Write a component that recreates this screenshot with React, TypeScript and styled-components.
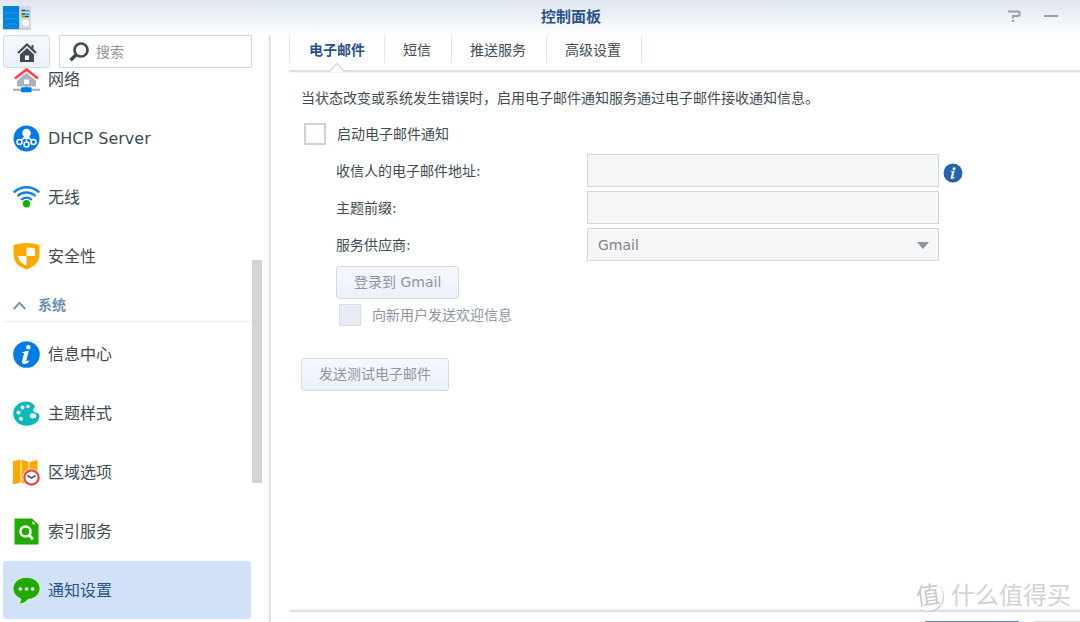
import React from "react";
import styled, { createGlobalStyle, css } from "styled-components";

const GlobalStyle = createGlobalStyle`
  * { box-sizing: border-box; }
  html, body { margin: 0; padding: 0; background: #fff; }
  body, button, input, select {
    font-family: "DejaVu Sans", "Noto Sans CJK SC", sans-serif;
    font-size: 14px;
    color: #414b55;
  }
`;

const Window = styled.div`
  position: relative;
  display: flex;
  flex-direction: column;
  height: 100vh;
  overflow: hidden;
  background: #fff;
`;

const TitleBar = styled.header`
  flex: none;
  display: grid;
  grid-template-columns: 142px 1fr 80px;
  align-items: center;
  height: 35px;
  background: linear-gradient(#dfe6ef, #fdfeff);
`;

const AppIcon = styled.svg`
  display: block;
  margin-left: 3px;
`;

const Title = styled.h1`
  margin: 0;
  padding-bottom: 2px;
  text-align: center;
  font-size: 15px;
  line-height: 20px;
  font-weight: 700;
  color: #2b528c;
`;

const WindowControls = styled.div`
  display: flex;
  gap: 17px;
  padding: 0 0 4px 4px;
`;

const ControlButton = styled.button`
  display: flex;
  padding: 0;
  border: 0;
  background: none;
`;

const Body = styled.div`
  flex: 1;
  min-height: 0;
  display: flex;
`;

const Sidebar = styled.aside`
  flex: none;
  width: 271px;
  display: flex;
  flex-direction: column;
  border-right: 2px solid #e4e4e4;
  box-shadow: inset -2px 0 2px -1px #eee;
`;

const SearchRow = styled.div`
  flex: none;
  display: flex;
  gap: 9px;
  padding: 0 17px 0 3px;
`;

const buttonFace = css`
  border: 1px solid #d2dae4;
  border-radius: 3px;
  background: linear-gradient(#f5f8fe, #ecf1fa);
`;

const HomeButton = styled.button`
  ${buttonFace}
  flex: none;
  display: flex;
  align-items: center;
  justify-content: center;
  width: 47px;
  height: 33px;
  padding: 0;
`;

const SearchBox = styled.label`
  flex: 1;
  min-width: 0;
  display: flex;
  align-items: center;
  gap: 7px;
  height: 33px;
  padding: 0 9px;
  border: 1px solid #d2dae2;
  background: #fff;
`;

const SearchInput = styled.input`
  flex: 1;
  min-width: 0;
  padding: 0;
  border: 0;
  outline: 0;
  background: none;
  line-height: 20px;
  &::placeholder { color: #8d959d; opacity: 1; }
`;

const ListArea = styled.div`
  flex: 1;
  min-height: 0;
  display: flex;
  gap: 1px;
  padding-left: 3px;
`;

const ListViewport = styled.nav`
  flex: 1;
  min-width: 0;
  overflow: hidden;
`;

const List = styled.div`
  display: flex;
  flex-direction: column;
  gap: 1px;
  margin-top: -18px;
`;

const Item = styled.a<{ $active?: boolean }>`
  flex: none;
  display: flex;
  align-items: center;
  gap: 8px;
  height: 58px;
  padding-left: 10px;
  border-radius: 3px;
  font-size: 16px;
  line-height: 24px;
  text-decoration: none;
  color: ${(p) => (p.$active ? "#2b528c" : "#414b55")};
  background: ${(p) => (p.$active ? "#d1e2f8" : "transparent")};
`;

const ItemLabel = styled.span`
  padding-top: 1px;
`;

const GroupHeading = styled.h2`
  flex: none;
  display: flex;
  align-items: center;
  gap: 12px;
  height: 36px;
  margin: 0 0 2px;
  padding: 3px 0 0 10px;
  border-bottom: 1px solid #e8edf1;
  font-size: 14px;
  line-height: 20px;
  font-weight: 700;
  color: #6a8fae;
`;

const ScrollTrack = styled.div`
  flex: none;
  display: flex;
  flex-direction: column;
  width: 10px;
  margin-right: 7px;
`;

const TrackGap = styled.div<{ $grow: number }>`
  flex: ${(p) => p.$grow} 0 0;
`;

const ScrollThumb = styled.div`
  flex: 223 0 0;
  background: #d1d3d5;
`;

const Main = styled.main`
  flex: 1;
  min-width: 0;
  display: flex;
  flex-direction: column;
  padding-left: 18px;
`;

const TabBar = styled.div`
  position: relative;
  flex: none;
  display: flex;
  height: 37px;
  padding-bottom: 7px;
  border-bottom: 2px solid #e0e0e0;
  box-shadow: 0 1px 1px #f4f4f4;
`;

const Tab = styled.button<{ $active?: boolean }>`
  position: relative;
  height: 28px;
  padding: 2px 20px 0 18px;
  border: 0;
  border-right: 1px solid #dfe7ef;
  background: none;
  line-height: 20px;
  font-weight: ${(p) => (p.$active ? 700 : 400)};
  color: ${(p) => (p.$active ? "#2b528c" : "#414b55")};
  &:first-child {
    padding: 2px 19px 0;
    border-left: 1px solid #dfe7ef;
  }
`;

const TabNotch = styled.svg`
  position: absolute;
  left: 50%;
  top: 27px;
  margin-left: -8px;
`;

const Content = styled.section`
  flex: 1;
  min-height: 0;
  padding: 16px 12px 0;
`;

const Intro = styled.p`
  margin: 0 0 15px;
  line-height: 20px;
  height: 20px;
  white-space: nowrap;
`;

const CheckRow = styled.div<{ $nested?: boolean }>`
  display: flex;
  align-items: center;
  gap: 11px;
  height: 22px;
  margin: ${(p) => (p.$nested ? "0 0 0 3px" : "0 0 9px 3px")};
  line-height: 20px;
  color: ${(p) => (p.$nested ? "#8c959f" : "#414b55")};
`;

const CheckBox = styled.input`
  appearance: none;
  flex: none;
  width: 22px;
  height: 22px;
  margin: 0;
  border: 2px solid #ccd3e0;
  background: #fff;
  &:disabled {
    border: 1px solid #d6dee9;
    background: #e7ecf4;
  }
`;

const Fields = styled.div`
  display: grid;
  grid-template-columns: 251px minmax(0, 352px) 24px;
  align-items: center;
  gap: 4px 0;
  padding-left: 35px;
  margin-bottom: 5px;
`;

const FieldLabel = styled.label`
  grid-column: 1;
  line-height: 20px;
`;

const fieldFace = css`
  display: block;
  width: 100%;
  height: 33px;
  padding: 0 10px;
  border: 1px solid #d0d8e0;
  border-radius: 0;
  background: #f5f6f8;
  color: #7f8489;
  opacity: 1;
`;

const TextField = styled.input`
  ${fieldFace}
`;

const SelectWrap = styled.div`
  position: relative;
`;

const SelectField = styled.select`
  ${fieldFace}
  appearance: none;
`;

const SelectArrow = styled.svg`
  position: absolute;
  right: 10px;
  top: 14px;
  pointer-events: none;
`;

const InfoButton = styled.button`
  display: flex;
  padding: 4px 0 0;
  margin-left: 4px;
  border: 0;
  background: none;
`;

const Nested = styled.div`
  display: flex;
  flex-direction: column;
  align-items: flex-start;
  gap: 5px;
  padding-left: 35px;
  margin-bottom: 32px;
`;

const PushButton = styled.button`
  ${buttonFace}
  height: 33px;
  padding: 0 17px 2px;
  line-height: 20px;
  color: #8c959f;
`;

const Footer = styled.footer`
  flex: none;
  display: flex;
  justify-content: flex-end;
  gap: 15px;
  height: 12px;
  padding-top: 9px;
  overflow: hidden;
  border-top: 2px solid #e0e0e0;
  box-shadow: 0 -1px 2px #f1f1f1;
`;

const FooterButton = styled.button<{ $primary?: boolean }>`
  flex: none;
  width: ${(p) => (p.$primary ? "94px" : "46px")};
  height: 33px;
  padding: 0;
  border: 1px solid ${(p) => (p.$primary ? "#5f7fb6" : "#d0dae4")};
  background: ${(p) => (p.$primary ? "#5f7fb6" : "#f0f4fb")};
`;

const Watermark = styled.div`
  position: absolute;
  right: 9px;
  bottom: 10px;
  display: flex;
  align-items: center;
  gap: 8px;
  font-size: 24px;
  line-height: 32px;
  color: #d2d2d2;
  text-shadow: 1px 1px 0 #fff;
  pointer-events: none;
`;

const WatermarkSeal = styled.span`
  display: flex;
  align-items: center;
  justify-content: center;
  width: 30px;
  height: 30px;
  border-radius: 50%;
  box-shadow: 1px 1px 1px #c8c8c8;
  background: #fff;
  color: #cacaca;
`;

const SealGlyph = styled.span`
  transform: rotate(-8deg);
`;

const icon = { width: 27, height: 27, viewBox: "0 0 27 27", "aria-hidden": true } as const;

const NetworkIcon = () => (
  <svg {...icon}>
    <path d="M4 14 13.500 5.500l9.500 8.500V20.500H4z" fill="#a9b3bf" />
    <path d="M11 18v-4.500h5V18z" fill="#fff" />
    <path d="M2 13 13.500 3.500 25 13" fill="none" stroke="#fff" strokeWidth="5" />
    <path d="M2 12.500 13.500 3.500 25 12.500" fill="none" stroke="#fd4044" strokeWidth="2.600" />
    <path d="M12.500 20h2v3h-2z" fill="#a9b3bf" />
    <path d="M0 22.700h27v2.200H0z" fill="#a9b3bf" />
    <rect x="8" y="21.300" width="10.500" height="5" rx="1" fill="#007be8" />
  </svg>
);

const DhcpIcon = () => (
  <svg {...icon}>
    <circle cx="13.500" cy="13.500" r="13" fill="#007be8" />
    <circle cx="13.500" cy="8" r="4.300" fill="#fff" />
    <path d="M11 11h5l1 3h-7z" fill="#fff" />
    <g fill="none" stroke="#fff" strokeWidth="1.500">
      <path d="M13.500 11v5.500M11 13l-3 2.500M16 13l3 2.500" />
      <circle cx="6.500" cy="17" r="2.500" />
      <circle cx="13.500" cy="19.500" r="2.500" />
      <circle cx="20.500" cy="17" r="2.500" />
    </g>
  </svg>
);

const WirelessIcon = () => (
  <svg {...icon}>
    <g fill="none" stroke="#0d82e8" strokeWidth="2.400">
      <path d="M.8 8.500a18 18 0 0 1 25.400 0" />
      <path d="M4.600 12.200a12.600 12.600 0 0 1 17.800 0" />
      <path d="M8.200 15.800a7.500 7.500 0 0 1 10.600 0" />
    </g>
    <circle cx="13.500" cy="19.800" r="3.700" fill="#1fab00" />
  </svg>
);

const ShieldIcon = () => (
  <svg {...icon}>
    <path d="M.5 2Q13.500-1.800 26.500 2V11c0 8-5 12.500-13 15.500C5.500 23.500.5 19 .5 11z" fill="#ffa800" />
    <path d="M13.500 4.500q4.500 0 8.500 1V13h-8.500zM5 13h8.500v9.500C8.500 20.500 5.500 17.500 5 13z" fill="#fff" />
  </svg>
);

const InfoCenterIcon = () => (
  <svg {...icon}>
    <circle cx="13.500" cy="13.500" r="13.300" fill="#007be8" />
    <circle cx="15.300" cy="6.300" r="2.300" fill="#fff" />
    <path d="M9.300 11.200c2.500-.8 4.500-1.200 6.500-1.200l-2.500 9.300c-.2 1 .2 1.400 2.400-.1l.8.800c-2.200 2.500-4.300 3.300-6 3-1.600-.4-1.800-1.600-1.300-3.500l1.800-6.800c-.2-.6-.7-.7-1.700-.7z" fill="#fff" />
  </svg>
);

const PaletteIcon = () => (
  <svg {...icon}>
    <path d="M13.500 1.500C6 1.500.3 6.700.3 13.500S6 25.700 13.500 25.700c7.700 0 12.800-4.500 13-9.200.1-2-1.300-3.500-3.700-4-1.900-.4-2.600-1.400-2.600-2.800 0-1.300 1-2 2-3-2-3.300-5-5.200-8.700-5.200z" fill="#08b8ba" />
    <g fill="#fff">
      <circle cx="15" cy="6.500" r="1.800" />
      <circle cx="9.500" cy="7.500" r="2" />
      <circle cx="5.500" cy="12.500" r="2" />
      <circle cx="8" cy="18.800" r="2" />
      <ellipse cx="20" cy="15.800" rx="3.200" ry="2.600" />
    </g>
  </svg>
);

const RegionIcon = () => (
  <svg {...icon}>
    <path d="M0 2.500 7.500.5v23L0 25.500zM8.500.5l7 2.500v23l-7-2.500zM16.500 3l8-2v22l-8 2.500z" fill="#ffa800" />
    <circle cx="18.500" cy="18.500" r="9" fill="#fff" />
    <circle cx="18.500" cy="18.500" r="7.200" fill="#fff" stroke="#f83c46" strokeWidth="2.200" />
    <path d="m14.500 16.500 4 2.500 4-2.500" fill="none" stroke="#4c5763" strokeWidth="1.700" />
  </svg>
);

const IndexIcon = () => (
  <svg {...icon}>
    <path d="M1.500.5H19l6.500 6V26.500h-24z" fill="#1fab00" />
    <path d="M19.500 3v3.200h3.200z" fill="#fff" />
    <circle cx="12.500" cy="13.500" r="5" fill="none" stroke="#fff" strokeWidth="2.500" />
    <path d="m16 17 4 4.300" stroke="#fff" strokeWidth="2.800" />
  </svg>
);

const NotificationIcon = () => (
  <svg {...icon} overflow="visible">
    <path d="M13.500.8C6 .8.4 5.400.4 11.500c0 4.500 3 8.200 7.500 9.900.5 2-.3 3.700-1.500 5 3.300.3 6.700-1.500 8.700-4.300 6.800-.5 11.600-5 11.600-10.600C26.700 5.400 21 .8 13.500.8z" fill="#1fab00" stroke="#eefae9" strokeWidth="1.200" paintOrder="stroke" />
    <g fill="#fff">
      <circle cx="7.300" cy="12" r="1.800" />
      <circle cx="13.500" cy="12" r="1.800" />
      <circle cx="19.700" cy="12" r="1.800" />
    </g>
  </svg>
);

const network = [
  { name: "网络", Icon: NetworkIcon },
  { name: "DHCP Server", Icon: DhcpIcon },
  { name: "无线", Icon: WirelessIcon },
  { name: "安全性", Icon: ShieldIcon },
];

const system = [
  { name: "信息中心", Icon: InfoCenterIcon },
  { name: "主题样式", Icon: PaletteIcon },
  { name: "区域选项", Icon: RegionIcon },
  { name: "索引服务", Icon: IndexIcon },
  { name: "通知设置", Icon: NotificationIcon, active: true },
];

const tabs = ["电子邮件", "短信", "推送服务", "高级设置"];

export default function App() {
  return (
    <Window>
      <GlobalStyle />
      <TitleBar>
        <AppIcon width="28" height="24" viewBox="0 0 28 24" aria-hidden>
          <rect width="28" height="24" rx="1" fill="#c9ced3" />
          <path d="M0 0h16v23H0z" fill="#0484e0" />
          <path d="M1.500 6.500 3 8l2-2.500M1.500 12.500 3 14l2-2.500M1.500 18.500 3 20l2-2.500M6 7h7.500M6 12.500h7.500M6 18h7.500" stroke="#06a5ee" fill="none" />
          <path d="M17 0h11v22H17z" fill="#d5d9dc" />
          <path d="M18.500 4.500h4M18.500 8h4M22 10.500h4" stroke="#38424a" strokeWidth="1.500" />
          <path d="M23 4h3.500v1.500H23zM23 7.500h3.500V9H23z" fill="#00b4f0" />
          <path d="M18.500 9.500h3.500v2h-3.500z" fill="#62c800" />
          <circle cx="22.500" cy="17" r="3.500" fill="#f4fbff" />
        </AppIcon>
        <Title>控制面板</Title>
        <WindowControls>
          <ControlButton aria-label="帮助">
            <svg width="20" height="14" viewBox="0 0 20 14" aria-hidden>
              <path d="M4 2.500h9.500c3 0 3 4.500 0 4.500H9v2.500" fill="none" stroke="#9b9fa4" strokeWidth="2" />
              <path d="M8 11h2v2H8z" fill="#9b9fa4" />
            </svg>
          </ControlButton>
          <ControlButton aria-label="最小化">
            <svg width="20" height="14" viewBox="0 0 20 14" aria-hidden>
              <path d="M3 7h14" stroke="#9b9fa4" strokeWidth="2" />
            </svg>
          </ControlButton>
        </WindowControls>
      </TitleBar>

      <Body>
        <Sidebar>
          <SearchRow>
            <HomeButton aria-label="主页">
              <svg width="20" height="20" viewBox="0 0 20 20" aria-hidden>
                <path d="M1 11 10 2.500l9 8.500" fill="none" stroke="#414b55" strokeWidth="2.300" />
                <path d="M3 12.500 10 6l7 6.500V20H3z" fill="#414b55" />
                <path d="M8 13.500h4V18H8z" fill="#fff" />
                <path d="M14.500 3h2v4.500l-2-2z" fill="#414b55" />
              </svg>
            </HomeButton>
            <SearchBox>
              <svg width="20" height="20" viewBox="0 0 20 20" aria-hidden>
                <circle cx="12" cy="8" r="6.500" fill="none" stroke="#414b55" strokeWidth="2.700" />
                <path d="m7.200 12.700-5.700 5.500" stroke="#414b55" strokeWidth="3.600" />
              </svg>
              <SearchInput type="text" placeholder="搜索" aria-label="搜索" />
            </SearchBox>
          </SearchRow>
          <ListArea>
            <ListViewport>
              <List>
                {network.map(({ name, Icon }) => (
                  <Item key={name} href="#">
                    <Icon />
                    <ItemLabel>{name}</ItemLabel>
                  </Item>
                ))}
                <GroupHeading>
                  <svg width="13" height="9" viewBox="0 0 13 9" aria-hidden>
                    <path d="m.7 8.200 5.800-6.400 5.800 6.400" fill="none" stroke="#6a8fae" strokeWidth="1.800" />
                  </svg>
                  系统
                </GroupHeading>
                {system.map(({ name, Icon, active }) => (
                  <Item key={name} href="#" $active={active}>
                    <Icon />
                    <ItemLabel>{name}</ItemLabel>
                  </Item>
                ))}
              </List>
            </ListViewport>
            <ScrollTrack>
              <TrackGap $grow={192} />
              <ScrollThumb />
              <TrackGap $grow={139} />
            </ScrollTrack>
          </ListArea>
        </Sidebar>

        <Main>
          <TabBar role="tablist">
            {tabs.map((name, i) => (
              <Tab key={name} role="tab" aria-selected={i === 0} $active={i === 0}>
                {name}
                {i === 0 && (
                  <TabNotch width="16" height="10" viewBox="0 0 16 10" aria-hidden>
                    <path d="M0 10 8 1l8 9z" fill="#fff" />
                    <path d="M0 9h1L8 1.500 15 9h1" fill="none" stroke="#dcdcdc" strokeWidth="1.800" />
                  </TabNotch>
                )}
              </Tab>
            ))}
          </TabBar>
          <Content>
            <Intro>当状态改变或系统发生错误时，启用电子邮件通知服务通过电子邮件接收通知信息。</Intro>
            <CheckRow>
              <CheckBox type="checkbox" id="enable" />
              <label htmlFor="enable">启动电子邮件通知</label>
            </CheckRow>
            <Fields>
              <FieldLabel htmlFor="recipient">收信人的电子邮件地址:</FieldLabel>
              <TextField id="recipient" type="text" disabled />
              <InfoButton aria-label="说明">
                <svg width="20" height="20" viewBox="0 0 20 20" aria-hidden>
                  <circle cx="10" cy="10" r="9.500" fill="#2563b4" />
                  <circle cx="11" cy="5.700" r="1.500" fill="#fff" />
                  <path d="M7.800 8.300 11.600 8l-1.500 6c0 .6.500.5 1.400-.2l.4.500c-1.200 1.400-2.300 1.900-3.300 1.700-.9-.2-1-.9-.8-1.800L9 9.500c-.2-.4-.6-.5-1.200-.5z" fill="#fff" />
                </svg>
              </InfoButton>
              <FieldLabel htmlFor="prefix">主题前缀:</FieldLabel>
              <TextField id="prefix" type="text" disabled />
              <FieldLabel htmlFor="provider">服务供应商:</FieldLabel>
              <SelectWrap>
                <SelectField id="provider" disabled defaultValue="Gmail">
                  <option>Gmail</option>
                </SelectField>
                <SelectArrow width="12" height="7" viewBox="0 0 12 7" aria-hidden>
                  <path d="M0 0h12L6 7z" fill="#8a949e" />
                </SelectArrow>
              </SelectWrap>
            </Fields>
            <Nested>
              <PushButton disabled>登录到 Gmail</PushButton>
              <CheckRow $nested>
                <CheckBox type="checkbox" id="welcome" disabled />
                <label htmlFor="welcome">向新用户发送欢迎信息</label>
              </CheckRow>
            </Nested>
            <PushButton disabled>发送测试电子邮件</PushButton>
          </Content>
          <Footer>
            <FooterButton $primary aria-label="应用" />
            <FooterButton aria-label="重置" />
          </Footer>
        </Main>
      </Body>

      <Watermark>
        <WatermarkSeal>
          <SealGlyph>值</SealGlyph>
        </WatermarkSeal>
        什么值得买
      </Watermark>
    </Window>
  );
}
